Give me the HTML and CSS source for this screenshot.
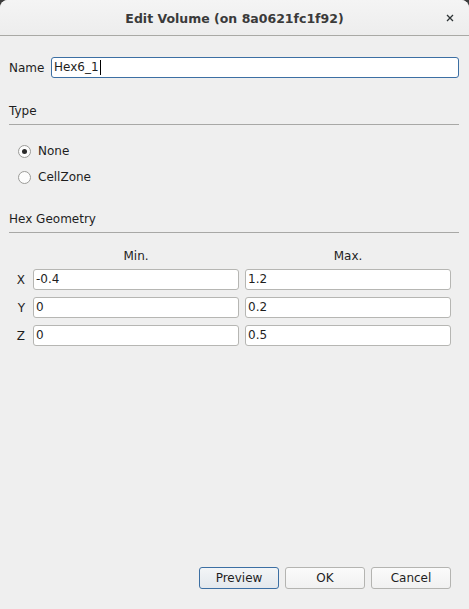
FILE: index.html
```html
<!DOCTYPE html>
<html>
<head>
<meta charset="utf-8">
<link rel="stylesheet" href="styles.css">
</head>
<body>
<div class="dialog">
  <header class="titlebar">
    <span class="title">Edit Volume (on 8a0621fc1f92)</span>
    <span class="close">
      <svg width="8" height="8" viewBox="0 0 8 8"><path d="M1 1L7 7M7 1L1 7" stroke="#2e3436" stroke-width="1.3"/></svg>
    </span>
  </header>
  <main class="content">
    <div class="name-row">
      <label class="lbl">Name</label>
      <div class="field focused">Hex6_1<span class="caret"></span></div>
    </div>

    <div class="section">
      <div class="section-title">Type</div>
      <div class="sep"></div>
      <div class="radios">
        <div class="radio-row"><span class="radio checked"></span><span>None</span></div>
        <div class="radio-row"><span class="radio"></span><span>CellZone</span></div>
      </div>
    </div>

    <div class="section geo">
      <div class="section-title">Hex Geometry</div>
      <div class="sep"></div>
      <div class="grid">
        <span></span><span class="colhead">Min.</span><span class="colhead">Max.</span>
        <span class="axis">X</span><div class="field">-0.4</div><div class="field">1.2</div>
        <span class="axis">Y</span><div class="field">0</div><div class="field">0.2</div>
        <span class="axis">Z</span><div class="field">0</div><div class="field">0.5</div>
      </div>
    </div>

    <div class="spacer"></div>

    <div class="buttons">
      <button class="btn default">Preview</button>
      <button class="btn">OK</button>
      <button class="btn">Cancel</button>
    </div>
  </main>
</div>
</body>
</html>
```

FILE: styles.css
```css
html, body {
  margin: 0;
  padding: 0;
  background: #3c3c3c;
}
body {
  font-family: "DejaVu Sans", sans-serif;
  font-size: 12px;
  color: #1e1e1e;
}
.dialog {
  width: 469px;
  height: 609px;
  display: flex;
  flex-direction: column;
  background: #efefef;
  border-radius: 8px 8px 0 0;
  overflow: hidden;
}
.titlebar {
  height: 36px;
  flex: none;
  position: relative;
  display: flex;
  align-items: center;
  justify-content: center;
  background: linear-gradient(#f4f4f4, #ededed);
  border-bottom: 1px solid #a9a9a5;
  box-sizing: border-box;
}
.title {
  font-weight: bold;
  font-size: 12.5px;
  color: #3a3a3a;
  padding-top: 2px;
}
.close {
  position: absolute;
  right: 15px;
  top: 14px;
  width: 8px;
  height: 8px;
  display: flex;
}
.content {
  flex: 1;
  display: flex;
  flex-direction: column;
  padding: 21px 10px 20px 9px;
}
.name-row {
  display: flex;
  align-items: center;
  gap: 8px;
}
.lbl {
  width: 34px;
}
.field {
  flex: 1;
  height: 21px;
  box-sizing: border-box;
  background: #fff;
  border: 1px solid #b6b6b3;
  border-radius: 3px;
  padding: 0 2px;
  line-height: 19px;
  display: flex;
  align-items: center;
}
.field.focused {
  border-color: #3c6fa3;
}
.caret {
  display: inline-block;
  width: 1px;
  height: 15px;
  background: #000;
  margin-left: 1px;
}
.section {
  margin-top: 26px;
}
.section-title {
  line-height: 15px;
}
.sep {
  height: 1px;
  background: #a8a8a6;
  margin-top: 5px;
}
.radios {
  margin-top: 18px;
  padding-left: 9px;
  display: flex;
  flex-direction: column;
  gap: 10px;
}
.radio-row {
  display: flex;
  align-items: center;
  gap: 7px;
  height: 16px;
}
.radio {
  width: 13px;
  height: 13px;
  box-sizing: border-box;
  border: 1px solid #9b9b98;
  border-radius: 50%;
  background: #fcfcfc;
  display: flex;
  align-items: center;
  justify-content: center;
}
.radio.checked::after {
  content: "";
  width: 5px;
  height: 5px;
  border-radius: 50%;
  background: #2a2a2a;
}
.geo {
  margin-top: 27px;
}
.grid {
  margin-top: 16px;
  margin-right: 8px;
  display: grid;
  grid-template-columns: 18px 1fr 1fr;
  column-gap: 6px;
  row-gap: 7px;
  align-items: center;
}
.grid .colhead {
  text-align: center;
  line-height: 15px;
  margin-bottom: -2px;
}
.axis {
  text-align: right;
  padding-right: 2px;
}
.spacer {
  flex: 1;
}
.buttons {
  display: flex;
  justify-content: flex-end;
  gap: 6px;
  padding-right: 8px;
}
.btn {
  width: 80px;
  height: 22px;
  font-family: "DejaVu Sans", sans-serif;
  font-size: 12px;
  color: #1e1e1e;
  border: 1px solid #b4b4b1;
  border-radius: 3px;
  background: linear-gradient(#fbfbfb, #f1f1f1);
  padding: 0;
}
.btn.default {
  border-color: #3c6fa3;
  background: linear-gradient(#f3f5f7, #e3e8ed);
}
```
